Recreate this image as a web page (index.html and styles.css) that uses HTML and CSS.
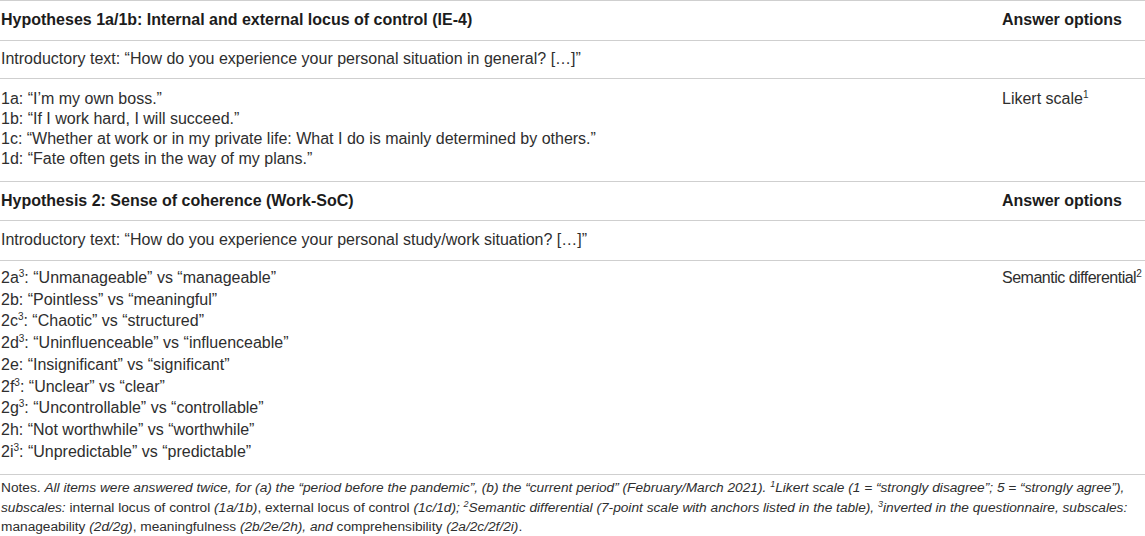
FILE: index.html
```html
<!DOCTYPE html>
<html>
<head>
<meta charset="utf-8">
<link rel="stylesheet" href="styles.css">
</head>
<body>
<div class="tbl">
  <div class="row head h1">
    <div class="c1">Hypotheses 1a/1b: Internal and external locus of control (IE-4)</div>
    <div class="c2">Answer options</div>
  </div>
  <div class="row intro i1">
    <div class="c1">Introductory text: “How do you experience your personal situation in general? […]”</div>
    <div class="c2"></div>
  </div>
  <div class="row items items1">
    <div class="c1">
      <div>1a: “I’m my own boss.”</div>
      <div>1b: “If I work hard, I will succeed.”</div>
      <div>1c: “Whether at work or in my private life: What I do is mainly determined by others.”</div>
      <div>1d: “Fate often gets in the way of my plans.”</div>
    </div>
    <div class="c2"><div>Likert scale<sup>1</sup></div></div>
  </div>
  <div class="row head h2">
    <div class="c1">Hypothesis 2: Sense of coherence (Work-SoC)</div>
    <div class="c2">Answer options</div>
  </div>
  <div class="row intro i2">
    <div class="c1">Introductory text: “How do you experience your personal study/work situation? […]”</div>
    <div class="c2"></div>
  </div>
  <div class="row items items2">
    <div class="c1">
      <div>2a<sup>3</sup>: “Unmanageable” vs “manageable”</div>
      <div>2b: “Pointless” vs “meaningful”</div>
      <div>2c<sup>3</sup>: “Chaotic” vs “structured”</div>
      <div>2d<sup>3</sup>: “Uninfluenceable” vs “influenceable”</div>
      <div>2e: “Insignificant” vs “significant”</div>
      <div>2f<sup>3</sup>: “Unclear” vs “clear”</div>
      <div>2g<sup>3</sup>: “Uncontrollable” vs “controllable”</div>
      <div>2h: “Not worthwhile” vs “worthwhile”</div>
      <div>2i<sup>3</sup>: “Unpredictable” vs “predictable”</div>
    </div>
    <div class="c2"><div class="tight">Semantic differential<sup>2</sup></div></div>
  </div>
  <div class="notes">Notes. <i>All items were answered twice, for (a) the “period before the pandemic”, (b) the “current period” (February/March 2021). <sup>1</sup>Likert scale (1 = “strongly disagree”; 5 = “strongly agree”),</i><br><i>subscales:</i> internal locus of control <i>(1a/1b)</i>, external locus of control <i>(1c/1d); <sup>2</sup>Semantic differential (7-point scale with anchors listed in the table), <sup>3</sup>inverted in the questionnaire, subscales:</i><br>manageability <i>(2d/2g)</i>, meaningfulness <i>(2b/2e/2h), and</i> comprehensibility <i>(2a/2c/2f/2i)</i>.</div>
</div>
</body>
</html>
```

FILE: styles.css
```css
html, body {
  margin: 0;
  padding: 0;
  background: #fff;
}
body {
  font-family: "Liberation Sans", Arial, sans-serif;
  color: #2e2e2e;
  width: 1145px;
  overflow: hidden;
}
.tbl {
  width: 1145px;
  border-top: 1px solid #cfcfcf;
}
.row {
  display: flex;
  box-sizing: border-box;
  border-bottom: 1px solid #cfcfcf;
  font-size: 16px;
  line-height: 20px;
}
.c1 {
  flex: 1;
  padding-left: 1px;
}
.c2 {
  width: 143px;
  white-space: nowrap;
}
.tight {
  letter-spacing: -0.5px;
}
.head {
  font-weight: bold;
  color: #1c1c1c;
}
.h1 { height: 40px; padding-top: 9px; }
.i1 { height: 38px; padding-top: 8px; }
.items1 { height: 103px; padding-top: 10px; }
.h2 { height: 39px; padding-top: 9px; }
.i2 { height: 40px; padding-top: 9px; }
.items2 {
  height: 214px;
  padding-top: 6px;
  line-height: 21.7px;
}
sup {
  font-size: 10px;
  line-height: 0;
  vertical-align: 6px;
}
.notes {
  font-size: 13.7px;
  line-height: 19.5px;
  padding-top: 3px;
  padding-left: 1px;
  white-space: nowrap;
}
.notes sup {
  font-size: 9px;
  vertical-align: 5px;
}
```
